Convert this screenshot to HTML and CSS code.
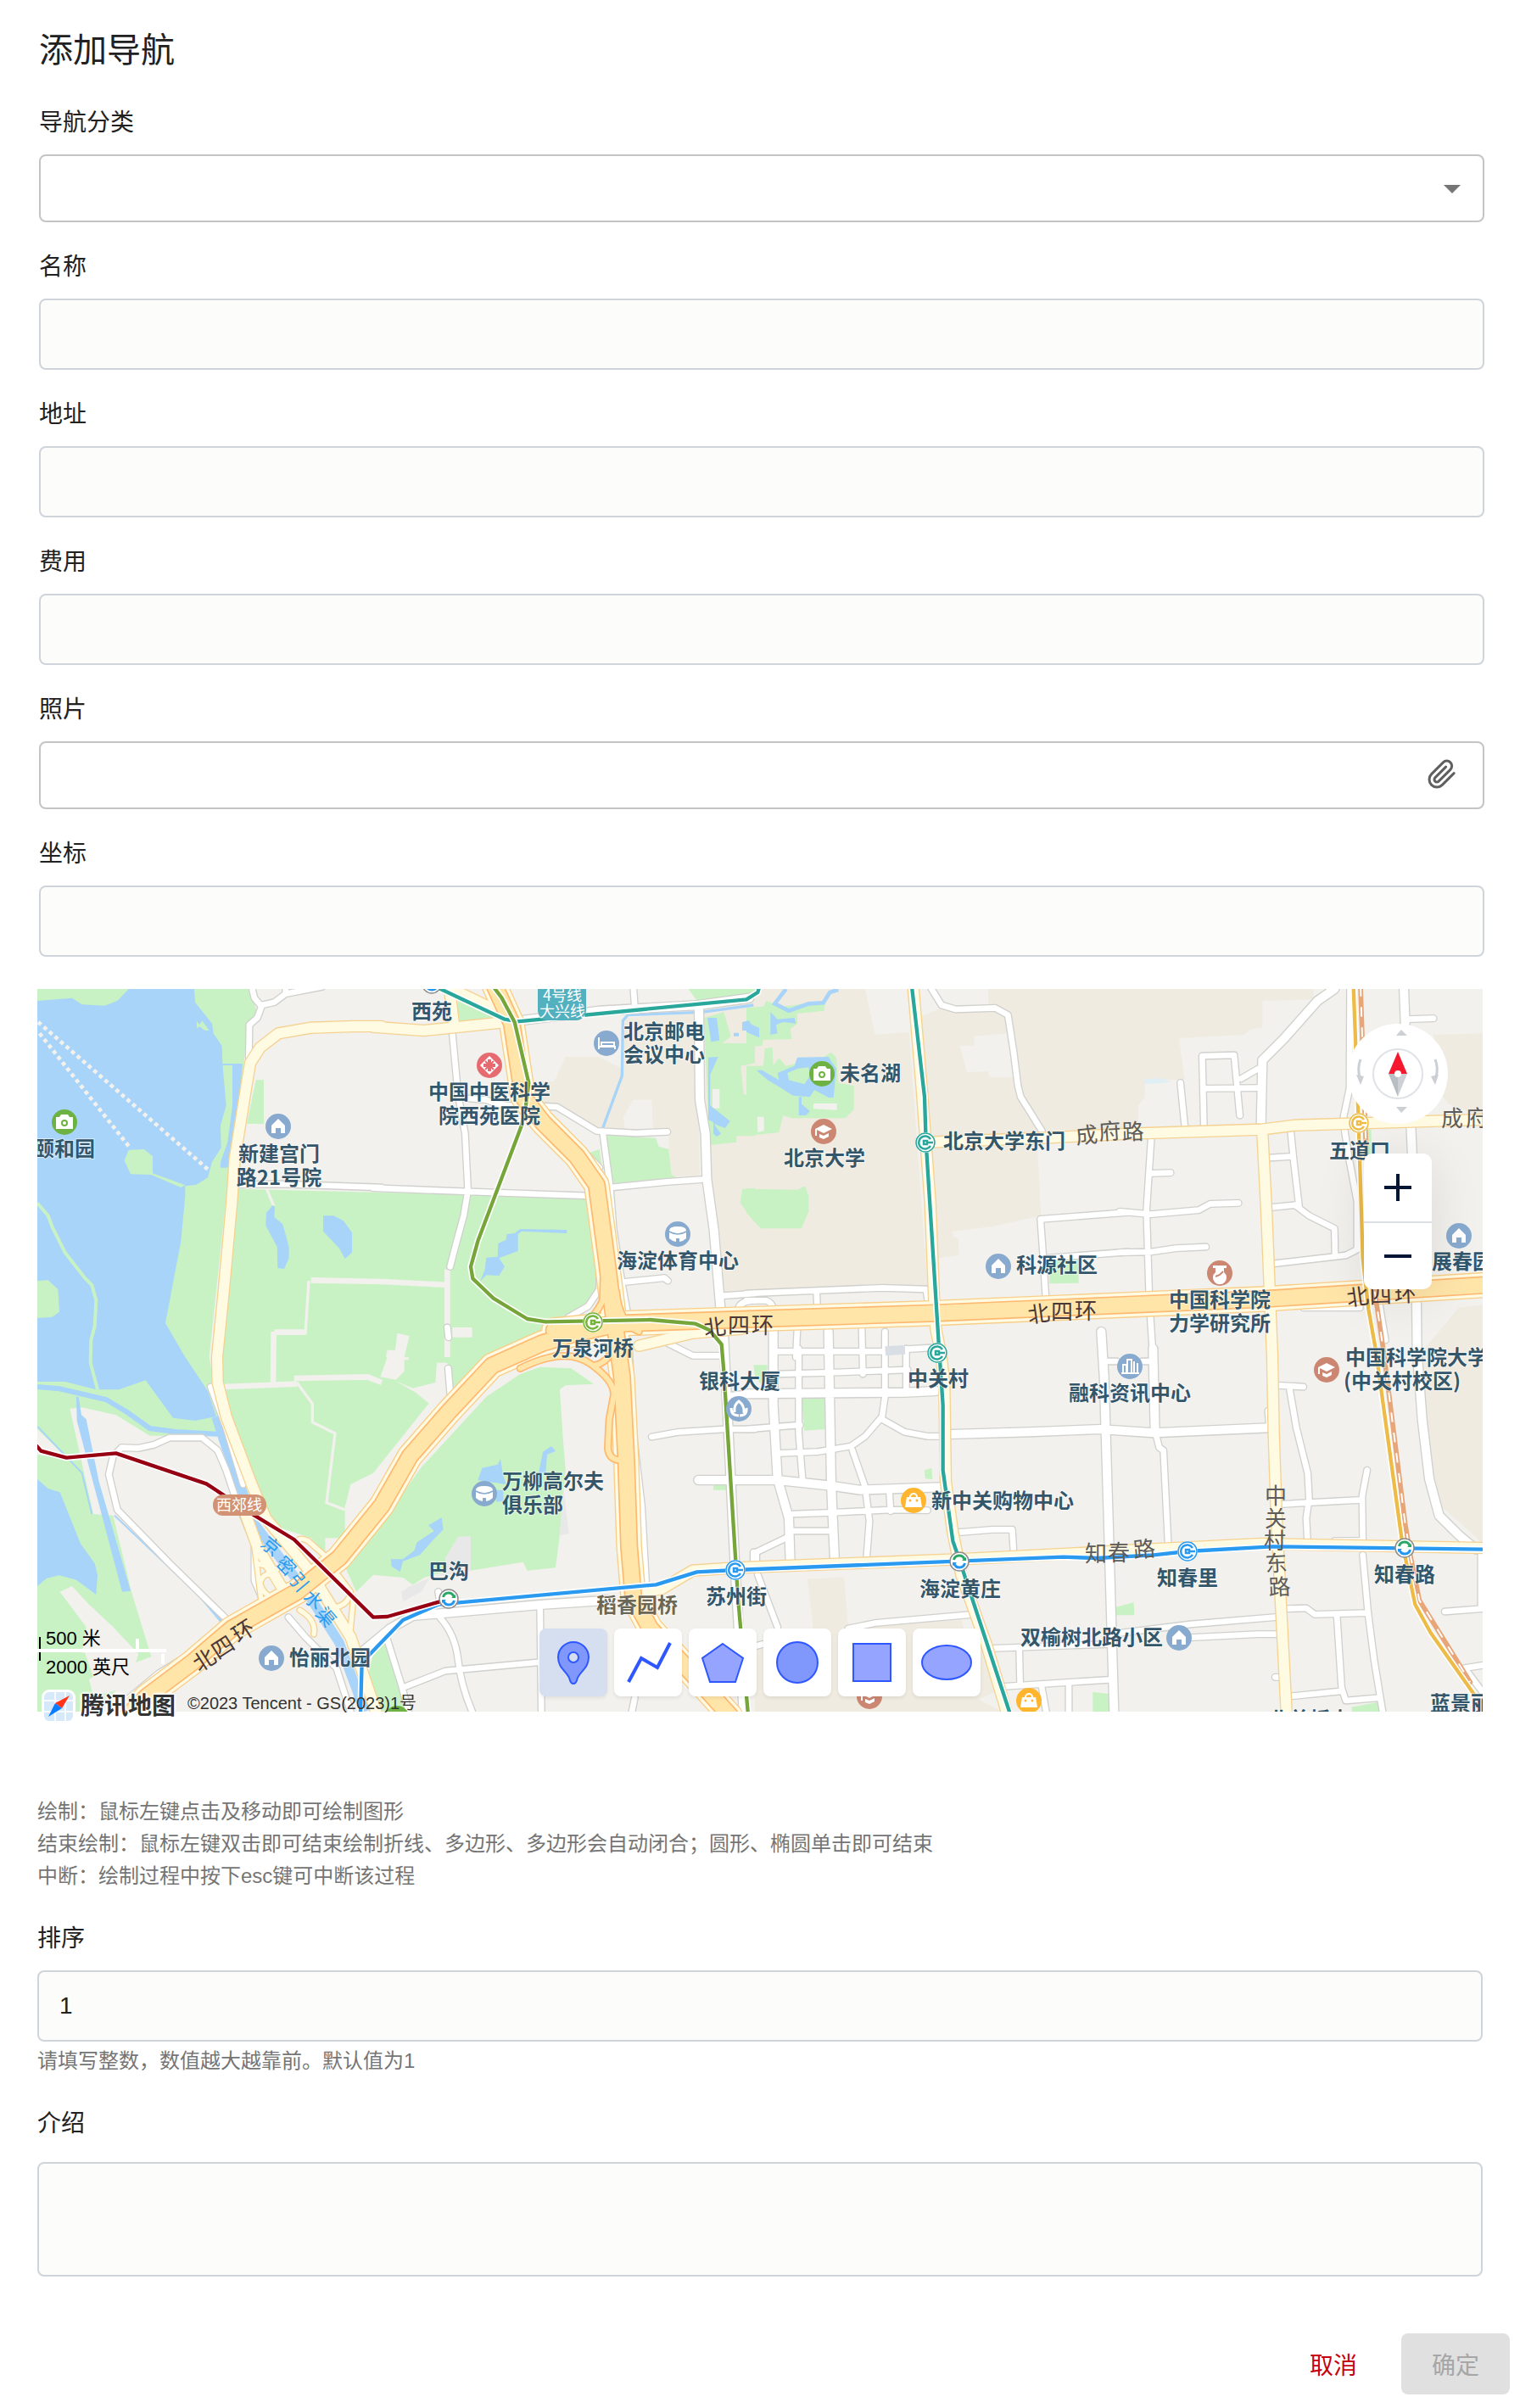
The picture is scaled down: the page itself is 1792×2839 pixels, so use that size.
FILE: index.html
```html
<!DOCTYPE html>
<html lang="zh-CN">
<head>
<meta charset="utf-8">
<meta name="viewport" content="width=device-width, initial-scale=1">
<title>添加导航</title>
<link rel="stylesheet" href="styles.css">
</head>
<body>
<form class="dialog">
  <h1 class="dialog-title">添加导航</h1>

  <div class="fields">
    <div class="field">
      <label class="field-label" for="category">导航分类</label>
      <div class="control">
        <select class="input outlined" id="category"><option value=""></option></select>
        <svg class="select-arrow" viewBox="0 0 24 24" aria-hidden="true"><path d="M7 10l5 5 5-5z"/></svg>
      </div>
    </div>
    <div class="field">
      <label class="field-label" for="name">名称</label>
      <input class="input" id="name" type="text">
    </div>
    <div class="field">
      <label class="field-label" for="address">地址</label>
      <input class="input" id="address" type="text">
    </div>
    <div class="field">
      <label class="field-label" for="cost">费用</label>
      <input class="input" id="cost" type="text">
    </div>
    <div class="field">
      <label class="field-label" for="photo">照片</label>
      <div class="control">
        <input class="input outlined" id="photo" type="text" readonly>
        <button class="attach" type="button" aria-label="选择照片">
          <svg viewBox="0 0 24 24" aria-hidden="true"><path d="M21.44 11.05l-9.19 9.19a6 6 0 0 1-8.49-8.49l9.19-9.19a4 4 0 0 1 5.66 5.66l-9.2 9.19a2 2 0 0 1-2.83-2.83l8.49-8.48"/></svg>
        </button>
      </div>
    </div>
    <div class="field">
      <label class="field-label" for="coords">坐标</label>
      <input class="input" id="coords" type="text">
    </div>
  </div>

  <div class="map">
    <svg class="map-canvas" viewBox="0 0 1704 852">
      <defs>
        <g id="minor">
          <g transform="translate(-132 -48)">
            <path d="M890 40L900 80 925 110 910 150 882 175 880 290M925 105L970 95 1010 65 1140 40M1010 40V60M850 740L1000 738 1350 750"/>
          </g>
          <g transform="translate(1188 -48)">
            <path d="M0 752L480 770 770 780M280 205L300 420 325 560 335 760 320 850 290 960 272 1030M340 435L400 440 440 455 520 465M590 462L650 465 790 550 930 558 1040 553M812 555L838 750 850 900 880 1090 900 1200M840 750L1040 730 1160 722M920 40L925 110M885 1085L1030 1070 1042 1080M785 800L800 1000 800 1110 760 1170 690 1210M1240 1133L1350 1125M1290 1190Q1290 1150 1350 1150M1040 1300L1130 1345 1225 1345M262 1245L266 1280M600 475L800 680"/>
          </g>
          <g transform="translate(2508 -48)">
            <path d="M0 1125L480 1105 635 1110 645 1170M0 1150H70Q90 1155 100 1190M248 1120L252 1200M650 40L690 105 740 120 880 115 925 140 945 270 960 390 970 430 1045 550M1350 838L1040 862 1050 1000 1060 1160M1060 1000L1350 978M180 1250L175 1350M408 1250L412 1410M110 1330H490M570 1322L650 1317"/>
          </g>
          <g transform="translate(3828 -48)">
            <path d="M0 835L110 845 280 830 320 808 420 805M0 980L110 978 200 965 305 960M112 570L95 830 105 1150 118 1350M115 700L180 698M215 380L230 530M298 530L292 285 405 282 425 495M295 400L490 398M430 365L490 330M605 550L615 650 635 820M530 645L610 640M540 820L620 812 670 850 760 895 762 990M815 40L813 400 790 510 810 640 840 800 840 970 800 990 540 1020M1020 155L1110 152M640 1112L860 1095 1284 1070M920 1170L940 1290M650 1175L850 1175"/>
          </g>
          <g transform="translate(-132 1272)">
            <path d="M745 135L800 280 860 480M410 370L430 350 490 352 545 340 600 315 715 315 770 360 800 430 830 520 900 690 900 820 930 890 915 900 940 915M400 380L385 445 415 570 600 760 820 975M440 1250L560 1150 820 990 950 905M1020 950L1080 1020 1190 1130 1240 1284"/>
          </g>
          <g transform="translate(1188 1272)">
            <path d="M265 70L275 190M985 312L1080 295 1240 285 1350 285M1270 165L1350 155M1280 470L1350 465M905 0L920 300 950 560 965 830M235 950Q290 1010 300 1100T350 1284M50 1030L100 1190 125 1284M590 910L595 1284M115 1195L255 1140 580 1110M915 1284L925 1235M230 860L235 890M1345 720V770"/>
          </g>
          <g transform="translate(2508 1272)">
            <path d="M185 0L185 300 198 460M110 90L290 85 570 75M0 285L190 270M375 360L420 490 435 610 425 740M165 585L300 580 510 570 640 572M165 645H300M505 500L510 575M480 250L560 295 640 310 690 310M490 -60L490 170 480 240 420 310 370 345 250 365 120 370M565 0V155M35 755V720L140 670M750 650L870 640 940 640 945 720M1270 45H1310M40 800L110 985M360 990L460 970 800 940M870 1060L1290 1045M910 1195L1300 1170M965 1060L968 1190M1045 1200L1060 1284M1140 1190V1284M5 1060L60 1045"/>
          </g>
          <g transform="translate(3828 1272)">
            <path d="M125 290L140 350 155 360 172 700M80 45H110M-30 1010L250 975 550 950M250 1022L490 1010 555 1010M560 130L650 135M600 135L625 280 665 440 670 530 660 600 665 690M575 550L760 540 855 535M875 430L858 520 860 680M760 680H860M860 730L878 930 900 1100 930 1284M595 920L660 918 690 940 875 935M768 940L785 1200 800 1245 920 1235M600 1230L780 1212M1150 930L1284 920M1278 730V910M1284 1120L1220 1130 1284 1215M525 220L530 280M550 1162H565"/>
          </g>
        </g>
        <g id="wide">
          <path d="M2340 67L2343 392 2363 512 2368 672 2393 852 2418 1152M1708 112L1988 77 2338 57 2518 32M2428 1232L2468 2052 2498 2556"/>
          <path transform="translate(2508 1272)" d="M95 -60L95 200 110 460 150 600 155 760M290 -60L295 200 300 480 312 750M0 160L560 155 670 150M-170 465L110 465 300 485 400 500 690 490M720 303L1000 295 1250 285 1440 298 1850 280M1255 -60L1265 100 1280 600 1300 1284"/>
          <path transform="translate(3828 -48)" d="M500 530L505 300 580 225 700 90 760 48M1005 40L1010 170M1030 530L1035 640M1050 1160L1052 1330 1070 1570 1095 1780 1130 1910 1200 1980 1260 2030"/>
          <path transform="translate(1188 1272)" d="M-60 1090L60 990 140 945 600 905 830 890"/>
          <path transform="translate(3828 1272)" d="M118 0L125 290"/>
        </g>
        <g id="avenue">
          <path transform="translate(-132 -48)" d="M1350 180L1250 180 1100 185 985 205 920 255 885 310 870 400 830 650 820 800 790 1130 768 1350 770 1440 800 1560 890 1800 940 1920 1090 2100 1240 2340 1330 2604M870 1910L910 2020 1000 2170"/>
          <path transform="translate(1188 -48)" d="M0 182L180 195 470 165M270 48L285 170M240 30L470 140M940 1310L1130 1265 1300 1250"/>
          <path transform="translate(2508 -48)" d="M590 40L620 400 650 800 665 1180 670 1250 690 1350 700 1450 705 1790 730 1970 760 2120 850 2370 920 2604M640 590L1045 575 1350 560 1820 545 1940 530 2604 510M1825 560L1840 850 1850 1100 1860 1350 1865 1620 1875 1920 1890 2220 1910 2604"/>
          <path transform="translate(1188 1272)" d="M950 860L1020 850 1130 785 1280 775 2070 745 2520 722 2640 715 3140 690 3924 705"/>
        </g>
        <g id="ramps">
          <path transform="translate(-132 1272)" d="M920 830Q930 790 965 800L1040 870 970 885Q930 870 920 830M1040 700Q1050 660 1090 680L1180 760M1180 780L1240 860Q1230 920 1160 915M1060 925Q1120 960 1110 1010M910 760L980 780M1250 880L1240 990M900 700L925 900"/>
        </g>
        <g id="highway">
          <path d="M1618 -10L1678 122 1718 382 1788 472 1908 592 1978 692 2013 952 2038 1152 2068 1372 2083 1672 2093 1972 2108 2152 2168 2262 2298 2402 2450 2570"/>
          <path d="M1828 1207L2088 1182 2538 1167 3158 1147 3858 1117 4328 1097 5120 1047M2030 1190L1890 1222 1788 1252 1608 1332 1458 1492 1318 1652 1218 1827 1068 2012 918 2132 688 2262 548 2382 388 2502 320 2570"/>
        </g>
        <g id="hiramps">
          <path transform="translate(1188 1272)" d="M520 70Q680 -10 770 55T850 170L835 250 830 350Q832 388 866 394M780 60Q820 55 855 0M620 -10Q760 -60 812 -170L815 -260M940 -60Q870 -90 860 -200"/>
        </g>

        <g id="i-home"><circle r="15"/><path fill="#fff" d="M-8-1L0-9 8-1V8H3V2H-3V8H-8z"/></g>
        <g id="i-camera"><circle r="15"/><path fill="#fff" d="M-10-6h4l2-3h8l2 3h4V8h-20z"/><circle cy="1" r="4"/><circle cy="1" r="2" fill="#fff"/></g>
        <g id="i-school"><circle r="15"/><path fill="#fff" d="M0-8L10-3 0 2-8-2V5h-2V-3zM-5 3L0 5 6 2V6L0 9-5 7z"/></g>
        <g id="i-arena"><circle r="15"/><path fill="#fff" d="M-10-4Q-10-9 0-9T10-4V5Q7 8 2 9V5H-2V9Q-7 8-10 5z"/><path fill="none" stroke="#88aace" stroke-width="1.5" d="M-10-3Q0 3 10-3"/></g>
        <g id="i-bag"><circle r="15"/><path fill="#fff" d="M-8-4H8L10 8h-20z"/><path fill="none" stroke="#fff" stroke-width="2" d="M-4-4a4 4 0 0 1 8 0"/><circle cx="-4" r="1.5"/><circle cx="4" r="1.5"/></g>
        <g id="i-metro"><circle r="12" fill="#fff"/><circle r="11" fill="none" stroke="currentColor" stroke-width="1.5"/><path fill="none" stroke="currentColor" stroke-width="2.5" d="M6-4A7.5 7.5 0 1 0 6 4"/><path fill="none" stroke="currentColor" stroke-width="2.5" d="M-2-2H2V2H-2zM3 0H9"/></g>
        <g id="i-transfer"><circle r="11" fill="#fff" stroke="#8c8c8c" stroke-width="1.5"/><path fill="none" stroke="#28a765" stroke-width="3" d="M-6.5-2A6.5 6.5 0 0 1 6-2.5"/><path fill="none" stroke="#2196f3" stroke-width="3" d="M6.500 2A6.500 6.500 0 0 1-6 2.500"/><path fill="#28a765" d="M3-1H8V-5z"/><path fill="#2196f3" d="M-3 1H-8V5z"/></g>
      </defs>

      <rect width="1704" height="852" fill="#f2f1ed"/>

      <g transform="scale(.33333333)">
        <g class="campus">
          <path transform="translate(1188 -48)" d="M1130 135L890 150 880 330 820 300 800 288 680 288 640 375 560 378 550 420 590 450 650 465 790 540 890 540 885 500 920 440 985 440 990 545 1045 560 1045 610 1055 710 1155 710 1150 450z"/>
          <path transform="translate(2508 -48)" d="M-150 110L0 48H420L455 210 575 200 640 1100-90 1120-140 600zM855 48H1350V540L1045 550 1030 620 1042 850 870 888 730 905V925L750 930 752 990 680 1000 620 145 690 115 855 110z"/>
          <path transform="translate(3828 -48)" d="M0 48H685V85L505 90V185L465 190 440 210 210 222 230 370H90V430L65 460V520L0 545zM1110 210L1284 205V500L1165 455 1140 425zM1284 1165L1200 1175 1070 1330 1085 1620 1110 1770 1140 1880 1230 1960 1284 2010z"/>
          <path transform="translate(2508 1272)" d="M215 815L345 808 360 980 760 960 770 990 830 1040 880 1215 820 1240 905 1284H30V1060L230 1050 235 980z"/>
        </g>
        <path transform="translate(2508 -48)" fill="#f2f1ed" d="M805 215L925 205 945 360H860L855 340 780 342 755 250 805 248z"/>
        <g class="park">
          <path transform="translate(-132 -48)" d="M132 48H880L910 130 875 180 860 340 815 640 740 1350 790 1640 500 1640 450 2020 540 2410 330 2604H132zM905 370H933V525H873zM840 755L1640 775 2090 790 2120 1000V1120L2020 1200 1900 1260 1790 1350 1600 1500 1520 1510 1320 1760 1240 1800 1220 1880V1990H1150V2045L1100 1990 980 1950 900 1800 800 1520 770 1350z"/>
          <path transform="translate(1188 -48)" d="M300 90L430 150 290 165zM755 630L800 615 818 740 790 700zM825 565L1000 575 1010 605 1045 615 1055 705 1075 715 848 735zM1170 150L1240 130 1265 215 1235 240H1350V310L1300 320 1310 420 1350 430V568L1285 568V590L1190 600zM1115 48H1350L1330 90 1145 90zM1305 755L1350 752V875L1298 805z"/>
          <path transform="translate(2508 -48)" d="M0 48H40L35 70 0 85zM0 115L60 110 70 90 130 110 280 90 275 125 180 135V170L155 190 160 225 60 228 55 250 0 250zM0 320H60L65 258 92 255 95 318 115 292 140 320 270 290 300 272 318 290 325 380 380 390V475L350 505H160L130 495 115 555 0 568zM0 755L180 758 208 745 220 780V835L195 895H50L0 840zM1070 1010L1175 1005V1088L1072 1090z"/>
          <path transform="translate(3828 -48)" d="M876 545H890V640H880z"/>
          <path transform="translate(1188 1272)" d="M590 65L700 70 780 125 680 130 660 145 670 300 680 430 660 660 645 775 545 785 530 755 345 785V665H300L290 700 255 740V790L180 810 140 835 105 810 0 800-60 860-100 770 0 660 170 420 400 170 520 90zM45 1040L105 1210 130 1284H0L-20 1160 0 1080zM1203 480L1250 478V500H1203z"/>
          <path transform="translate(2508 1272)" d="M25 58H75L70 95 50 125 30 95zM195 175H278V285L205 290zM630 430L655 422 658 462 632 460zM1305 915L1370 897 1372 943H1305zM1225 1215L1290 1222V1284H1225z"/>
          <path transform="translate(3828 1272)" d="M820 1268L915 1250 918 1284H822z"/>
        </g>
        <g fill="#f2f1ed">
          <path transform="translate(-132 1272)" d="M247 212L290 208 410 235 530 308 770 310 880 600 890 800 930 900 480 1190 330 1230 315 1170 330 1160 300 1075 480 1110 535 1090 465 860 400 590 330 585zM132 285L240 390 132 375zM212 860L255 840 310 900 400 985 490 1080 480 1110 290 1075 305 985z"/>
          <path transform="translate(1188 -48)" d="M85 1265L128 1275 110 1350 45 1350 50 1325 78 1325zM280 1245H350V1280H280zM50 1350H125V1360L110 1360V1400L80 1430 25 1420z"/>
          <path transform="translate(1188 1272)" d="M225 50H262L275 190 240 230 150 155 80 115 140 140 220 120z"/>
          <path transform="translate(2508 -48)" d="M237 453H320V476L237 472zM38 500H62V550L40 555z"/>
          <path transform="translate(1188 -48)" d="M1200 402H1225V470H1200z"/>
        </g>
        <g fill="none" stroke="#f2f1ed" stroke-width="20">
          <path transform="translate(-132 -48)" d="M1590 1095L1350 1083 1100 1078M970 1262H1080M968 1260L966 1440M790 1455L1050 1445M1040 1425L1300 1420 1350 1440"/>
          <path transform="translate(1188 -48)" d="M262 1040V1350"/>
          <path transform="translate(-132 -48)" stroke-width="10" d="M1092 1080L1080 1270M1050 1440L1105 1515V1580L1185 1620 1155 1865 1220 1890M943 755L968 815"/>
        </g>
        <path transform="translate(1188 1272)" fill="#e8e8e8" d="M300 665H345V785L200 810 170 860 105 895 100 860 130 840 255 790V740zM672 480L692 655 660 660z"/>
        <g class="water">
          <path transform="translate(-132 -48)" d="M132 90L255 80 290 103 370 107 415 90 455 48H687L690 95 750 170 755 205 785 250 787 315 800 460 780 530 782 610 750 660 735 715 695 740 655 745V780L640 940 585 1230 655 1350 735 1470 765 1560 690 1575 612 1565 515 1432 420 1465H340L230 1437H132zM787 312H858L840 500 805 680H780V660L805 590 822 460V318H787zM965 812L972 820 970 855 1000 880 1022 960V1000L1005 1038 982 1035 980 960 940 885 942 840zM1143 850H1180L1215 868 1245 910V980L1220 1002 1200 965 1143 905z"/>
          <path transform="translate(1188 -48)" d="M378 1082L395 1040 400 998 440 995 442 948 470 935 472 915 500 912 520 897 685 900V912L525 905 512 915V975L445 1000 465 1030 445 1062 400 1060zM1182 150H1215L1225 230 1195 235zM1185 290L1220 288 1192 350V460L1262 515 1245 540 1205 525 1230 560 1215 570 1203 560V520L1185 510zM1305 165L1330 160 1345 195H1305zM1275 203H1293V215H1275z"/>
          <path transform="translate(2508 -48)" d="M180 290L290 288 318 330 308 432H290L240 405 225 430 165 425 125 400 75 370 35 335H55L115 370 110 345 170 320zM185 430H195V455L225 480 210 495H185zM85 130L110 155 170 150 175 170 130 165 105 175 110 205 85 210zM0 160L20 175 45 185V220L0 200z"/>
          <path transform="translate(-132 1272)" d="M270 170H278L288 235 305 250 350 470 462 857 432 860 310 400 272 255zM132 462L170 495 212 508 285 690 335 760 345 800 340 870 270 818 210 802 165 812 132 840z"/>
          <path transform="translate(1188 1272)" d="M370 465L385 422 440 410 450 390 460 450 470 480zM585 440L600 365 630 345 645 362 615 375 610 440zM435 500H460V540L435 542zM195 625L242 598 248 640 200 690 165 730 105 752 95 790 65 770 62 745H105L145 715 155 685 215 645z"/>
        </g>
        <g class="park">
          <path transform="translate(-132 -48)" d="M440 655L455 617 510 615 540 640V700L655 742 640 750 535 705 462 703zM695 160L705 175 715 160 740 195H725L705 180 697 188zM132 1080L170 1078 205 1110 210 1190 185 1208 132 1212z"/>
          <path transform="translate(2508 -48)" d="M145 345L180 330 220 325 225 355 205 385 150 370z"/>
          <path transform="translate(-132 -48)" fill="none" stroke="#c8f2c4" stroke-width="12" d="M132 805L170 850 185 890 230 980 300 1070 325 1095 340 1150 335 1240 322 1290 320 1370 345 1465"/>
        </g>
        <path transform="translate(3828 -48)" fill="#e0eef6" d="M90 366L140 364 185 375 140 382 90 384z"/>
        <g fill="none" stroke="#a7d4f8">
          <path transform="translate(-132 1272)" stroke-width="18" d="M132 135L210 142 375 180 450 225 530 282 620 294 770 302"/>
          <path transform="translate(-132 1272)" stroke-width="34" d="M765 240L790 320 855 500 900 620 960 700 1090 870 1200 1040 1290 1284"/>
          <path transform="translate(-132 1272)" stroke-width="6" d="M132 275L290 440 325 585M405 590L700 870"/>
          <path transform="translate(-132 1272)" stroke-width="12" d="M700 865L805 990 915 910"/>
          <path transform="translate(1188 -48)" stroke-width="10" d="M1345 105L1160 130 900 140 883 160 880 355 812 540"/>
          <path transform="translate(2508 -48)" stroke-width="14" d="M140 48L100 100 150 125 220 100 272 97 295 60 325 50"/>
        </g>
        <path transform="translate(-132 -48)" fill="none" stroke="#f2f1ed" stroke-width="14" stroke-dasharray="14 12" d="M135 165L740 690M140 205L460 610"/>

        <g class="road">
          <use href="#minor" stroke="#d0d0cd" stroke-width="28"/>
          <use href="#wide" stroke="#d0d0cd" stroke-width="38"/>
          <use href="#minor" stroke="#fff" stroke-width="20"/>
          <use href="#wide" stroke="#fff" stroke-width="30"/>
          <use href="#avenue" stroke="#f5d292" stroke-width="44"/>
          <use href="#ramps" stroke="#f5d292" stroke-width="24"/>
          <use href="#highway" stroke="#f8ce88" stroke-width="92"/>
          <use href="#avenue" stroke="#fffae2" stroke-width="36"/>
          <use href="#ramps" stroke="#fffae2" stroke-width="16"/>
          <use href="#highway" stroke="#fffae2" stroke-width="84"/>
          <use href="#highway" stroke="#ffb870" stroke-width="64"/>
          <use href="#hiramps" stroke="#ffb870" stroke-width="28"/>
          <use href="#highway" stroke="#ffe5a8" stroke-width="54"/>
          <use href="#hiramps" stroke="#ffe5a8" stroke-width="18"/>
        </g>
        <path transform="translate(2508 -48)" fill="#d9dde4" d="M490 1312L560 1308 562 1340 492 1345z"/>

        <g class="road">
          <g id="rail" transform="translate(3828 -48)">
            <path stroke="#e8a678" stroke-width="17" d="M852 40L870 570 885 1000 935 1340 1010 1940 1030 2060 1060 2210 1240 2500"/>
            <path class="butt" stroke="#fff" stroke-width="6" stroke-dasharray="34 38" d="M852 40L870 570 885 1000 935 1340 1010 1940 1030 2060 1060 2210 1240 2500"/>
          </g>
          <g id="metro-lines">
            <path class="line-case" transform="translate(3828 -48)" d="M827 40L845 520 860 1000 880 1180 905 1320 1000 2010 1045 2225 1100 2325 1255 2545"/>
            <path stroke="#edbc48" transform="translate(3828 -48)" d="M827 40L845 520 860 1000 880 1180 905 1320 1000 2010 1045 2225 1100 2325 1255 2545"/>
            <path class="line-case" transform="translate(1188 -48)" d="M200 30L465 155 510 163 1320 85 1360 60 1366 40"/>
            <path stroke="#2aa79b" transform="translate(1188 -48)" d="M200 30L465 155 510 163 1320 85 1360 60 1366 40"/>
            <path class="line-case" transform="translate(1188 -48)" d="M425 40L455 80 500 165 550 380 540 460 525 530 370 940 345 1030 352 1072 425 1142 545 1215 610 1225 980 1218 1140 1232 1190 1255 1232 1305 1240 1400 1290 2200 1325 2604"/>
            <path stroke="#76a63a" transform="translate(1188 -48)" d="M425 40L455 80 500 165 550 380 540 460 525 530 370 940 345 1030 352 1072 425 1142 545 1215 610 1225 980 1218 1140 1232 1190 1255 1232 1305 1240 1400 1290 2200 1325 2604"/>
            <path class="line-case" transform="translate(2508 -48)" d="M585 40L630 430 635 590 680 1300 695 1520V1750L730 2000 755 2072 930 2604"/>
            <path stroke="#2aa79b" transform="translate(2508 -48)" d="M585 40L630 430 635 590 680 1300 695 1520V1750L730 2000 755 2072 930 2604"/>
            <path class="line-case" transform="translate(1188 1272)" d="M-45 1290L-40 1110 105 960 230 905 1000 835 1145 790 1280 783 2440 737 2560 741 2760 730 2880 717 3180 700 3924 710"/>
            <path stroke="#2a9af0" transform="translate(1188 1272)" d="M-45 1290L-40 1110 105 960 230 905 1000 835 1145 790 1280 783 2440 737 2560 741 2760 730 2880 717 3180 700 3924 710"/>
            <path class="line-case" transform="translate(-132 1272)" d="M130 345L145 362 235 386 410 370 730 478 900 590 1040 675 1320 950 1370 948 1555 895"/>
            <path stroke="#960012" transform="translate(-132 1272)" d="M130 345L145 362 235 386 410 370 730 478 900 590 1040 675 1320 950 1370 948 1555 895"/>
          </g>
        </g>
      </g>

      <rect x="590" y="-10" width="57" height="47" rx="12" fill="#52b0bf"/>
      <rect x="207" y="596" width="63" height="25" rx="12" fill="#d29274"/>
      <g class="line-name">
        <text x="619" y="14">4号线</text>
        <text x="619" y="33">大兴线</text>
        <text x="238" y="615">西郊线</text>
      </g>

      <g class="road-name">
        <text x="787 814 842" y="410 406 406" rotate="-8 0 0">北四环</text>
        <text x="1169 1195 1223" y="394 390 389" rotate="-8 0 0">北四环</text>
        <text x="1545 1571 1600" y="374 371 369" rotate="-8 -2 -2">北四环</text>
        <text x="191 213 237" y="806 791 772" rotate="-33">北四环</text>
      </g>
      <g class="road-name street">
        <text x="1225 1252 1279" y="183 178 178" rotate="-6 -4 -2">成府路</text>
        <text x="1655 1684" y="162 162">成府</text>
        <text x="1235 1262 1293" y="675 674 671" rotate="0 0 -6">知春路</text>
        <text x="1447 1447 1446 1448 1452" y="607 634 660 687 715" rotate="0 0 0 -3 -3">中关村东路</text>
      </g>
      <g class="road-name river"><text x="262 280 295 312 327" y="656 678 696 719 737" rotate="40 45 50 40 50">京密引水渠</text></g>

      <g class="places">
        <text x="32" y="197">颐和园</text>
        <text x="285" y="203">新建宫门</text><text x="285" y="231">路21号院</text>
        <text x="465" y="35">西苑</text>
        <text x="739" y="59">北京邮电</text><text x="739" y="86">会议中心</text>
        <text x="533" y="130">中国中医科学</text><text x="533" y="158">院西苑医院</text>
        <text x="755" y="329">海淀体育中心</text>
        <text x="655" y="432">万泉河桥</text>
        <text x="982" y="108">未名湖</text>
        <text x="928" y="208">北京大学</text>
        <text x="1140" y="188">北京大学东门</text>
        <text x="1202" y="334">科源社区</text>
        <text x="1559" y="199">五道口</text>
        <text x="1680" y="330">展春园</text>
        <text x="1394" y="375">中国科学院</text><text x="1394" y="403">力学研究所</text>
        <text x="1626" y="443">中国科学院大学</text><text x="1609" y="471">(中关村校区)</text>
        <text x="1062" y="468">中关村</text>
        <text x="1288" y="485">融科资讯中心</text>
        <text x="828" y="471">银科大厦</text>
        <text x="608" y="589">万柳高尔夫</text><text x="584" y="617">俱乐部</text>
        <text x="1138" y="612">新中关购物中心</text>
        <text x="1356" y="703">知春里</text>
        <text x="1612" y="699">知春路</text>
        <text x="1088" y="716">海淀黄庄</text>
        <text x="824" y="725">苏州街</text>
        <text x="485" y="695">巴沟</text>
        <text x="707" y="735" fill="#6b6656">稻香园桥</text>
        <text x="1243" y="773">双榆树北路小区</text>
        <text x="345" y="797">怡丽北园</text>
        <text x="1678" y="851">蓝景丽</text>
        <text x="1500" y="870">北美板中</text>
      </g>

      <g fill="#6eb243"><use href="#i-camera" x="32" y="157"/><use href="#i-camera" x="925" y="100"/><circle cx="424" cy="860" r="15"/></g>
      <g fill="#88aace">
        <use href="#i-home" x="284" y="162"/><use href="#i-home" x="1133" y="327"/><use href="#i-home" x="1676" y="291"/><use href="#i-home" x="1346" y="765"/><use href="#i-home" x="276" y="789"/>
        <use href="#i-arena" x="755" y="289"/><use href="#i-arena" x="527" y="595"/>
        <circle cx="671" cy="64" r="15"/><circle cx="1288" cy="445" r="15"/><circle cx="827" cy="495" r="15"/>
      </g>
      <path fill="none" stroke="#fff" stroke-width="2" d="M662 57V71M662 68H681V71M665 63H680V67H665z"/>
      <path fill="none" stroke="#fff" stroke-width="2" d="M1280 452V443H1284V452M1285 452V437H1290V452M1293 452V439M1297 452V441M1278 453H1299"/>
      <path fill="none" stroke="#fff" stroke-width="3" d="M822 499Q821 490 827 486Q834 491 833 500M818 494Q818 503 827 503M836 494Q837 503 828 503"/>
      <g fill="#cc8772"><use href="#i-school" x="927" y="168"/><use href="#i-school" x="1520" y="449"/><use href="#i-school" x="981" y="834"/><circle cx="1394" cy="335" r="15"/></g>
      <path fill="#fff" d="M1386 326H1402V329H1399V334A8 8 0 1 1 1389 334V329H1386z"/><path fill="none" stroke="#cc8772" stroke-width="2" d="M1389 339L1394 337 1398 333"/>
      <g fill="#ffb62e"><use href="#i-bag" x="1033" y="603"/><use href="#i-bag" x="1169" y="839"/></g>
      <circle cx="533" cy="90" r="15" fill="#e66b70"/><path fill="#fff" d="M533 79L544 90 533 101 522 90z"/><path stroke="#e66b70" stroke-width="4" d="M533 83V97M526 90H540"/><path stroke="#e66b70" stroke-width="2" d="M528 85L538 95M538 85L528 95"/>
      <use href="#i-metro" x="655" y="393" color="#76b33a"/><use href="#i-metro" x="1047" y="181" color="#2aa79b"/><use href="#i-metro" x="1061" y="429" color="#2aa79b"/><use href="#i-metro" x="1558" y="158" color="#edbc48"/><use href="#i-metro" x="823" y="685" color="#2a9af0"/><use href="#i-metro" x="1356" y="663" color="#2a9af0"/>
      <use href="#i-transfer" x="465" y="-6"/><use href="#i-transfer" x="485" y="719"/><use href="#i-transfer" x="1087" y="675"/><use href="#i-transfer" x="1612" y="659"/>

      <g class="scale">
        <path stroke="#fff" d="M0 780H152M118 766V778M148 784V796"/>
        <path stroke="#000" stroke-width="2" d="M3 764V778M3 782V792"/>
        <text x="10" y="773">500 米</text>
        <text x="10" y="807">2000 英尺</text>
      </g>
    </svg>

    <div class="map-controls">
      <button class="compass" type="button" aria-label="重置方向">
        <svg viewBox="0 0 118 118" aria-hidden="true">
          <circle cx="59" cy="59" r="29" fill="#fff" stroke="#dfe2e6" stroke-width="2"/>
          <path fill="#ccd0d5" d="M57 14L63 7 70 14zM57 98L63 105 70 98zM10 60L19 62 15 72zM98 62L107 60 103 72z"/>
          <path fill="none" stroke="#ccd0d5" stroke-width="3" d="M15 42Q11 52 14 63M103 42Q107 52 104 63"/>
          <path fill="#f5182f" d="M59 33L70 59H48z"/><path fill="#b8bdc4" d="M48 59H59V86z"/><path fill="#cdd1d6" d="M59 59H70L59 86z"/>
          <circle cx="59" cy="59" r="4" fill="#fff"/>
        </svg>
      </button>
      <div class="zoom">
        <button type="button" aria-label="放大"><svg viewBox="0 0 32 32" aria-hidden="true"><path d="M0 16H32M16 0V32"/></svg></button>
        <button type="button" aria-label="缩小"><svg viewBox="0 0 32 32" aria-hidden="true"><path d="M0 16H32"/></svg></button>
      </div>
    </div>

    <div class="draw-tools">
      <button class="tool active" type="button" aria-label="点"><svg viewBox="0 0 80 80"><path d="M40 16A18 18 0 0 1 58 34C58 48 46 51 44 61Q43 65 40 65T36 61C34 51 22 48 22 34A18 18 0 0 1 40 16z"/><circle cx="40" cy="34" r="6" fill="#d5dff0"/></svg></button>
      <button class="tool" type="button" aria-label="折线"><svg viewBox="0 0 80 80"><path class="polyline" d="M17 63L32 35 51 46 66 17"/></svg></button>
      <button class="tool" type="button" aria-label="多边形"><svg viewBox="0 0 80 80"><path d="M40 18L64 35 55 63H25L16 35z"/></svg></button>
      <button class="tool round" type="button" aria-label="圆形"><svg viewBox="0 0 80 80"><circle cx="40" cy="40" r="24"/></svg></button>
      <button class="tool" type="button" aria-label="矩形"><svg viewBox="0 0 80 80"><path d="M18 18H62V62H18z"/></svg></button>
      <button class="tool" type="button" aria-label="椭圆"><svg viewBox="0 0 80 80"><ellipse cx="40" cy="40" rx="29" ry="20"/></svg></button>
    </div>

    <div class="attribution">
      <svg class="brand-mark" viewBox="0 0 40 40" aria-hidden="true">
        <rect width="40" height="40" rx="9" fill="#fff"/><rect x="3" y="3" width="34" height="34" rx="6" fill="#d5e9fb"/>
        <path stroke="#f7fbff" stroke-width="2" d="M3 13H37M3 26H37M16 3V37M28 3V37"/>
        <path fill="#ff3519" d="M33 7L24 22 16 16z"/><path fill="#0a7cff" d="M8 32L16 16 24 22z"/>
      </svg>
      <span class="brand-name">腾讯地图</span>
      <span class="copyright">©2023 Tencent - GS(2023)1号</span>
    </div>
  </div>

  <div class="hints">
    <p>绘制：鼠标左键点击及移动即可绘制图形</p>
    <p>结束绘制：鼠标左键双击即可结束绘制折线、多边形、多边形会自动闭合；圆形、椭圆单击即可结束</p>
    <p>中断：绘制过程中按下esc键可中断该过程</p>
  </div>

  <div class="fields lower">
    <div class="field">
      <label class="field-label" for="order">排序</label>
      <input class="input" id="order" type="text" inputmode="numeric" value="1" aria-describedby="order-help">
      <p class="help" id="order-help">请填写整数，数值越大越靠前。默认值为1</p>
    </div>
    <div class="field">
      <label class="field-label spaced" for="intro">介绍</label>
      <textarea class="input area" id="intro"></textarea>
    </div>
  </div>

  <div class="actions">
    <button class="btn cancel" type="button">取消</button>
    <button class="btn confirm" type="submit" disabled>确定</button>
  </div>
</form>
</body>
</html>
```
FILE: styles.css
```css
* { box-sizing: border-box; }

body {
  margin: 0;
  background: #fff;
  color: #212121;
  font-family: "Liberation Sans", "Noto Sans CJK SC", sans-serif;
  font-size: 28px;
}

h1, p { margin: 0; }

button {
  border: 0;
  padding: 0;
  background: none;
  font: inherit;
  cursor: pointer;
}

.dialog {
  padding: 31px 0 16px;
}

.dialog-title {
  margin: 0 46px 37px;
  font-size: 40px;
  line-height: 56px;
  font-weight: 400;
}

.fields {
  display: flex;
  flex-direction: column;
  gap: 32px;
  padding: 0 42px 0 46px;
}

.fields.lower {
  gap: 34px;
  margin-top: 34px;
  padding: 0 44px;
}

.field {
  display: flex;
  flex-direction: column;
}

.field-label {
  margin-bottom: 16px;
  line-height: 42px;
}

.field-label.spaced { margin-bottom: 24px; }

.control {
  position: relative;
  display: flex;
}

.input {
  width: 100%;
  height: 84px;
  padding: 0 24px;
  border: 2px solid #ced4da;
  border-radius: 8px;
  background: #fcfcfa;
  color: #212121;
  font: inherit;
  appearance: none;
  outline: 0;
}

.input.outlined {
  height: 80px;
  border-color: #c4c4c4;
  background: #fff;
}

.input.area {
  height: 135px;
  padding: 20px 24px;
  resize: none;
}

.select-arrow {
  position: absolute;
  right: 14px;
  top: 16px;
  width: 48px;
  fill: #757575;
  pointer-events: none;
}

.attach {
  position: absolute;
  right: 32px;
  top: 21px;
  width: 36px;
  height: 36px;
}

.attach svg {
  display: block;
  fill: none;
  stroke: #5f5f5f;
  stroke-width: 2;
  stroke-linecap: round;
  stroke-linejoin: round;
}

/* Map */
.map {
  position: relative;
  margin: 38px 44px 0;
}

.map-canvas {
  display: block;
  width: 100%;
  overflow: hidden;
  font-family: "Noto Sans CJK SC", sans-serif;
}

.campus { fill: #efebe0; }
.park { fill: #c8f2c4; }
.water { fill: #a7d4f8; }

.road {
  fill: none;
  stroke-linecap: round;
  stroke-linejoin: round;
}

.butt { stroke-linecap: butt; }

#metro-lines { stroke-width: 13; }
.line-case { stroke: #fff; stroke-width: 23; }

.places {
  fill: #34566b;
  font-size: 24px;
  font-weight: 700;
  text-anchor: middle;
  paint-order: stroke;
  stroke: #fff;
  stroke-opacity: .6;
  stroke-width: 2px;
}

.road-name {
  fill: #4a3838;
  font-size: 26px;
}

.road-name.street { fill: #5c5c5c; }
.road-name.river { fill: #2a9cf0; font-size: 22px; }

.line-name {
  fill: #fff;
  font-size: 18px;
  text-anchor: middle;
}

.scale {
  fill: #000;
  font-family: "Liberation Sans", "Noto Sans CJK SC", sans-serif;
  font-size: 22px;
  stroke-width: 4;
}

.map-controls {
  position: absolute;
  top: 41px;
  right: 41px;
  display: flex;
  flex-direction: column;
  align-items: center;
  gap: 35px;
}

.compass {
  width: 118px;
  height: 118px;
  border-radius: 50%;
  background: #fff;
}

.compass svg { display: block; }

.zoom {
  width: 80px;
  border-radius: 10px;
  background: #fff;
  box-shadow: 0 8px 60px rgba(0, 0, 0, .1);
}

.zoom button {
  display: flex;
  align-items: center;
  justify-content: center;
  width: 80px;
  height: 80px;
}

.zoom button + button { border-top: 2px solid #dcdfe3; }

.zoom svg {
  width: 32px;
  fill: none;
  stroke: #041533;
  stroke-width: 4;
}

.draw-tools {
  position: absolute;
  right: 0;
  bottom: 18px;
  left: 0;
  display: flex;
  justify-content: center;
  gap: 8px;
}

.tool {
  width: 80px;
  height: 80px;
  border-radius: 8px;
  background: #fff;
  box-shadow: 0 2px 4px rgba(0, 0, 0, .08);
}

.tool.active { background: #d5dff0; }

.tool svg {
  display: block;
  fill: #95a5ff;
  stroke: #2f57ff;
  stroke-width: 2;
}

.tool.active svg,
.tool.round svg { fill: #8098fb; }

.tool .polyline { fill: none; stroke-width: 4; }

.attribution {
  position: absolute;
  left: 5px;
  bottom: -14px;
  display: flex;
  align-items: center;
  line-height: 40px;
}

.brand-mark {
  width: 40px;
  margin-right: 6px;
}

.brand-name {
  margin-right: 14px;
  color: #333;
  font-weight: 700;
  text-shadow: 0 0 2px #fff, 2px 0 2px #fff, -2px 0 2px #fff, 0 2px 2px #fff, 0 -2px 2px #fff;
}

.copyright {
  padding-bottom: 8px;
  color: #333;
  font-size: 20px;
  line-height: 32px;
}

.hints {
  margin: 99px 44px 0;
}

.hints, .help {
  color: #757575;
  font-size: 24px;
  line-height: 38px;
}

.help { margin-top: 4px; }

.actions {
  display: flex;
  justify-content: flex-end;
  gap: 16px;
  margin-top: 67px;
  padding: 0 12px;
}

.btn {
  width: 128px;
  height: 72px;
  border-radius: 8px;
}

.cancel { color: #c7000f; }

.confirm {
  background: #e0e0e0;
  color: #a6a6a6;
}
```
